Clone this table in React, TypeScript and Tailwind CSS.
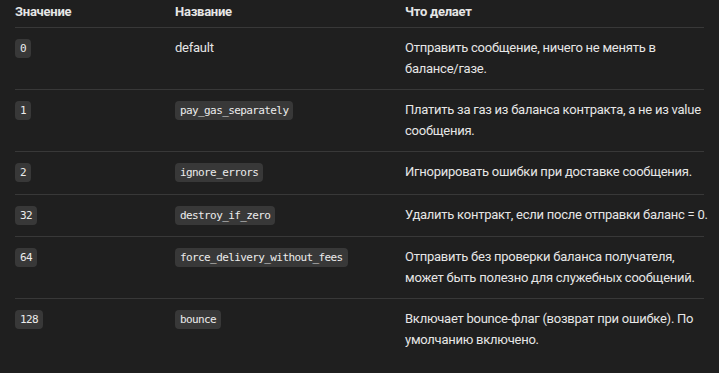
const rows = [
  { value: '0', name: 'default', plain: true, text: 'Отправить сообщение, ничего не менять в балансе/газе.' },
  { value: '1', name: 'pay_gas_separately', text: 'Платить за газ из баланса контракта, а не из value сообщения.' },
  { value: '2', name: 'ignore_errors', text: 'Игнорировать ошибки при доставке сообщения.' },
  { value: '32', name: 'destroy_if_zero', text: 'Удалить контракт, если после отправки баланс = 0.' },
  { value: '64', name: 'force_delivery_without_fees', text: 'Отправить без проверки баланса получателя, может быть полезно для служебных сообщений.' },
  { value: '128', name: 'bounce', text: 'Включает bounce-флаг (возврат при ошибке). По умолчанию включено.' },
];

const Code = ({ children }: { children: string }) => (
  <code className="rounded-[4px] bg-[#383838] px-[5px] py-[3px] font-['DejaVu_Sans_Mono',monospace] text-[11px] tracking-[-0.6px] text-[#ececec]">
    {children}
  </code>
);

export default function App() {
  return (
    <div className="min-h-[373px] w-full bg-[#1f1f1f] font-['Roboto',sans-serif] text-[13px] leading-[20.5px] tracking-[-0.25px] text-[#e6e6e6]">
      <div className="pl-[15px]">
        <div className="grid w-[689px] grid-cols-[160px_230px_304px] pt-[2px] pb-[4.5px] font-bold">
          <div>Значение</div>
          <div>Название</div>
          <div>Что делает</div>
        </div>
        {rows.map((r) => (
          <div key={r.value} className="grid w-[689px] grid-cols-[160px_230px_304px] border-t border-[#383838] py-[10px]">
            <div><Code>{r.value}</Code></div>
            <div>{r.plain ? r.name : <Code>{r.name}</Code>}</div>
            <div>{r.text}</div>
          </div>
        ))}
      </div>
    </div>
  );
}
